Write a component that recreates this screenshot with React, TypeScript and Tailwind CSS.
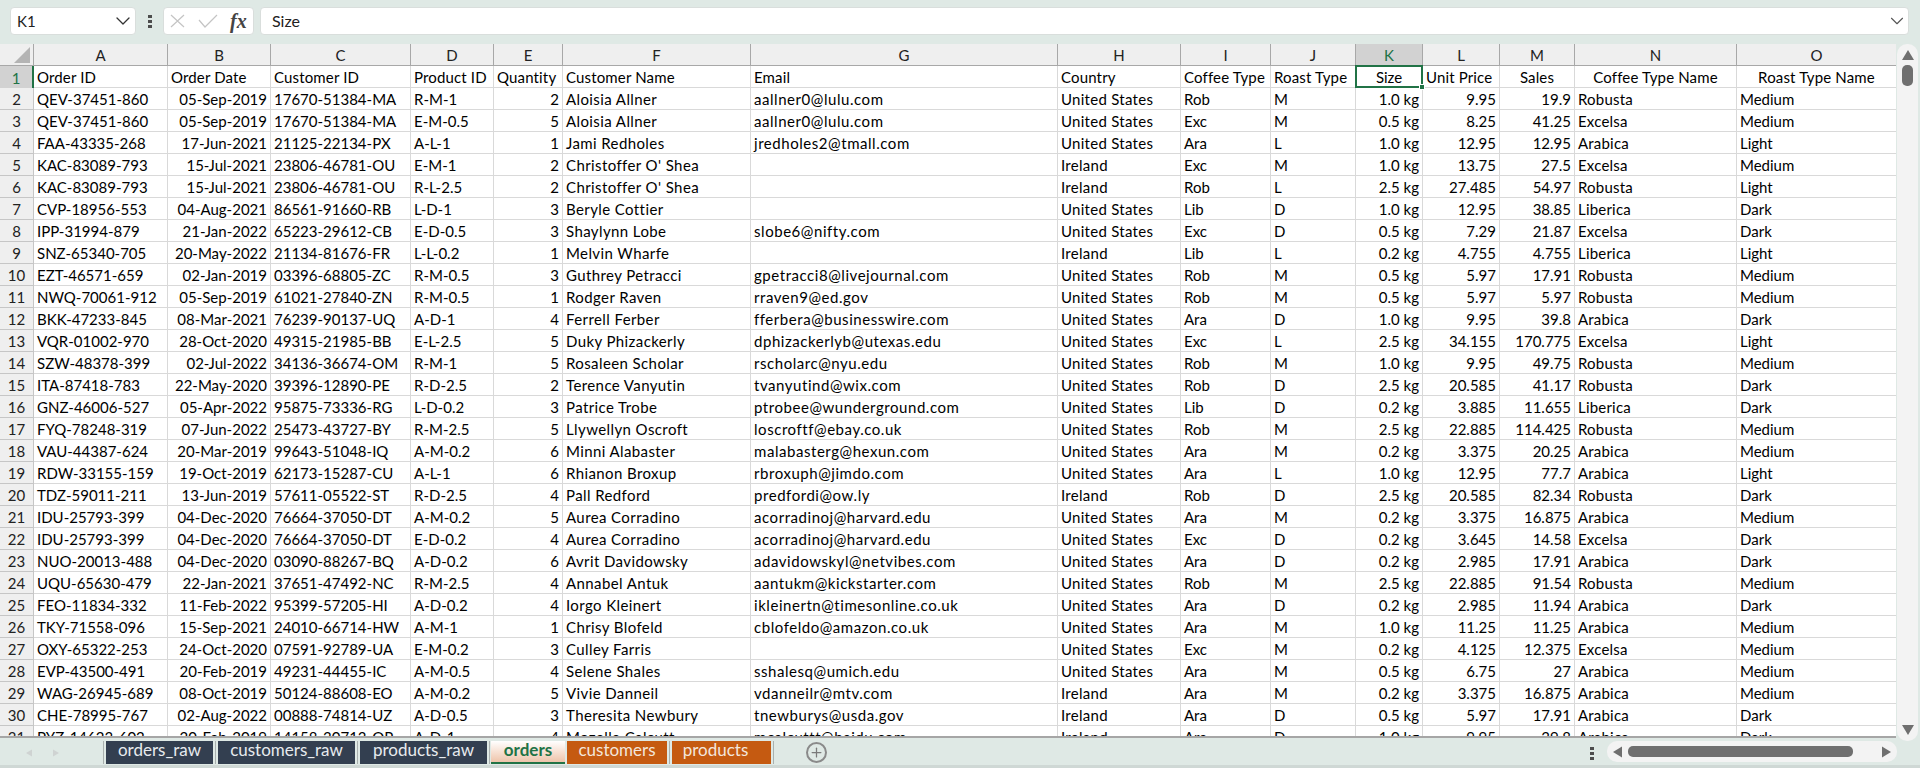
import { ChevronDown, Plus } from 'lucide-react'

const columns = ['A', 'B', 'C', 'D', 'E', 'F', 'G', 'H', 'I', 'J', 'K', 'L', 'M', 'N', 'O']

const headers = [
  'Order ID', 'Order Date', 'Customer ID', 'Product ID', 'Quantity', 'Customer Name', 'Email', 'Country',
  'Coffee Type', 'Roast Type', 'Size', 'Unit Price', 'Sales', 'Coffee Type Name', 'Roast Type Name',
]

// columns whose data sits on the right of the cell
const rightAligned = [1, 4, 10, 11, 12]
const centeredHeaders = [10, 12, 13, 14]

// lowercase runs wider in the sheet than Lato does
const spacing: Record<number, string> = {
  5: 'tracking-[0.4px]',
  6: 'tracking-[0.55px]',
  7: 'tracking-[0.28px]',
  13: 'tracking-[0.2px]',
}

const rows = `QEV-37451-860|05-Sep-2019|17670-51384-MA|R-M-1|2|Aloisia Allner|aallner0@lulu.com|United States|Rob|M|1.0 kg|9.95|19.9|Robusta|Medium
QEV-37451-860|05-Sep-2019|17670-51384-MA|E-M-0.5|5|Aloisia Allner|aallner0@lulu.com|United States|Exc|M|0.5 kg|8.25|41.25|Excelsa|Medium
FAA-43335-268|17-Jun-2021|21125-22134-PX|A-L-1|1|Jami Redholes|jredholes2@tmall.com|United States|Ara|L|1.0 kg|12.95|12.95|Arabica|Light
KAC-83089-793|15-Jul-2021|23806-46781-OU|E-M-1|2|Christoffer O' Shea||Ireland|Exc|M|1.0 kg|13.75|27.5|Excelsa|Medium
KAC-83089-793|15-Jul-2021|23806-46781-OU|R-L-2.5|2|Christoffer O' Shea||Ireland|Rob|L|2.5 kg|27.485|54.97|Robusta|Light
CVP-18956-553|04-Aug-2021|86561-91660-RB|L-D-1|3|Beryle Cottier||United States|Lib|D|1.0 kg|12.95|38.85|Liberica|Dark
IPP-31994-879|21-Jan-2022|65223-29612-CB|E-D-0.5|3|Shaylynn Lobe|slobe6@nifty.com|United States|Exc|D|0.5 kg|7.29|21.87|Excelsa|Dark
SNZ-65340-705|20-May-2022|21134-81676-FR|L-L-0.2|1|Melvin Wharfe||Ireland|Lib|L|0.2 kg|4.755|4.755|Liberica|Light
EZT-46571-659|02-Jan-2019|03396-68805-ZC|R-M-0.5|3|Guthrey Petracci|gpetracci8@livejournal.com|United States|Rob|M|0.5 kg|5.97|17.91|Robusta|Medium
NWQ-70061-912|05-Sep-2019|61021-27840-ZN|R-M-0.5|1|Rodger Raven|rraven9@ed.gov|United States|Rob|M|0.5 kg|5.97|5.97|Robusta|Medium
BKK-47233-845|08-Mar-2021|76239-90137-UQ|A-D-1|4|Ferrell Ferber|fferbera@businesswire.com|United States|Ara|D|1.0 kg|9.95|39.8|Arabica|Dark
VQR-01002-970|28-Oct-2020|49315-21985-BB|E-L-2.5|5|Duky Phizackerly|dphizackerlyb@utexas.edu|United States|Exc|L|2.5 kg|34.155|170.775|Excelsa|Light
SZW-48378-399|02-Jul-2022|34136-36674-OM|R-M-1|5|Rosaleen Scholar|rscholarc@nyu.edu|United States|Rob|M|1.0 kg|9.95|49.75|Robusta|Medium
ITA-87418-783|22-May-2020|39396-12890-PE|R-D-2.5|2|Terence Vanyutin|tvanyutind@wix.com|United States|Rob|D|2.5 kg|20.585|41.17|Robusta|Dark
GNZ-46006-527|05-Apr-2022|95875-73336-RG|L-D-0.2|3|Patrice Trobe|ptrobee@wunderground.com|United States|Lib|D|0.2 kg|3.885|11.655|Liberica|Dark
FYQ-78248-319|07-Jun-2022|25473-43727-BY|R-M-2.5|5|Llywellyn Oscroft|loscroftf@ebay.co.uk|United States|Rob|M|2.5 kg|22.885|114.425|Robusta|Medium
VAU-44387-624|20-Mar-2019|99643-51048-IQ|A-M-0.2|6|Minni Alabaster|malabasterg@hexun.com|United States|Ara|M|0.2 kg|3.375|20.25|Arabica|Medium
RDW-33155-159|19-Oct-2019|62173-15287-CU|A-L-1|6|Rhianon Broxup|rbroxuph@jimdo.com|United States|Ara|L|1.0 kg|12.95|77.7|Arabica|Light
TDZ-59011-211|13-Jun-2019|57611-05522-ST|R-D-2.5|4|Pall Redford|predfordi@ow.ly|Ireland|Rob|D|2.5 kg|20.585|82.34|Robusta|Dark
IDU-25793-399|04-Dec-2020|76664-37050-DT|A-M-0.2|5|Aurea Corradino|acorradinoj@harvard.edu|United States|Ara|M|0.2 kg|3.375|16.875|Arabica|Medium
IDU-25793-399|04-Dec-2020|76664-37050-DT|E-D-0.2|4|Aurea Corradino|acorradinoj@harvard.edu|United States|Exc|D|0.2 kg|3.645|14.58|Excelsa|Dark
NUO-20013-488|04-Dec-2020|03090-88267-BQ|A-D-0.2|6|Avrit Davidowsky|adavidowskyl@netvibes.com|United States|Ara|D|0.2 kg|2.985|17.91|Arabica|Dark
UQU-65630-479|22-Jan-2021|37651-47492-NC|R-M-2.5|4|Annabel Antuk|aantukm@kickstarter.com|United States|Rob|M|2.5 kg|22.885|91.54|Robusta|Medium
FEO-11834-332|11-Feb-2022|95399-57205-HI|A-D-0.2|4|Iorgo Kleinert|ikleinertn@timesonline.co.uk|United States|Ara|D|0.2 kg|2.985|11.94|Arabica|Dark
TKY-71558-096|15-Sep-2021|24010-66714-HW|A-M-1|1|Chrisy Blofeld|cblofeldo@amazon.co.uk|United States|Ara|M|1.0 kg|11.25|11.25|Arabica|Medium
OXY-65322-253|24-Oct-2020|07591-92789-UA|E-M-0.2|3|Culley Farris||United States|Exc|M|0.2 kg|4.125|12.375|Excelsa|Medium
EVP-43500-491|20-Feb-2019|49231-44455-IC|A-M-0.5|4|Selene Shales|sshalesq@umich.edu|United States|Ara|M|0.5 kg|6.75|27|Arabica|Medium
WAG-26945-689|08-Oct-2019|50124-88608-EO|A-M-0.2|5|Vivie Danneil|vdanneilr@mtv.com|Ireland|Ara|M|0.2 kg|3.375|16.875|Arabica|Medium
CHE-78995-767|02-Aug-2022|00888-74814-UZ|A-D-0.5|3|Theresita Newbury|tnewburys@usda.gov|Ireland|Ara|D|0.5 kg|5.97|17.91|Arabica|Dark
PYZ-14623-602|20-Feb-2019|14158-30713-OP|A-D-1|4|Mozelle Calcutt|mcalcuttt@baidu.com|Ireland|Ara|D|1.0 kg|9.95|39.8|Arabica|Dark`
  .split('\n')
  .map((line) => line.split('|'))

function Kebab() {
  return (
    <div className="flex flex-col gap-[2px]">
      <span className="w-[4px] h-[3px] bg-[#4d4d4d]" />
      <span className="w-[4px] h-[3px] bg-[#4d4d4d]" />
      <span className="w-[4px] h-[3px] bg-[#4d4d4d]" />
    </div>
  )
}

function Triangle({ dir, className }: { dir: 'left' | 'right' | 'up' | 'down'; className: string }) {
  const points = { left: '10,0 10,12 0,6', right: '0,0 0,12 10,6', up: '0,10 12,10 6,0', down: '0,0 12,0 6,10' }[dir]
  const box = dir === 'left' || dir === 'right' ? '0 0 10 12' : '0 0 12 10'
  return (
    <svg className={className} viewBox={box} fill="currentColor">
      <polygon points={points} />
    </svg>
  )
}

function FormulaBar() {
  return (
    <div className="h-[44px] flex items-start pt-[7px] pl-[10px] pr-[11px]">
      <div className="w-[126px] h-[28px] bg-white rounded-[4px] border border-[#d9dedc] flex items-center justify-between pl-[6px] text-[15px] text-[#222]">
        <span>K1</span>
        <ChevronDown className="w-[24px] h-[24px] text-[#333]" strokeWidth={1.3} />
      </div>
      <div className="w-[27px] h-[28px] flex items-center justify-center">
        <Kebab />
      </div>
      <div className="w-[91px] h-[28px] bg-white rounded-[4px] border border-[#d9dedc] flex items-center pl-[6px]">
        <svg className="w-[15px] h-[14px] text-[#c4c4c4]" viewBox="0 0 15 14" fill="none" stroke="currentColor" strokeWidth={1.2}>
          <path d="M1 1l13 12M14 1L1 13" />
        </svg>
        <svg className="w-[20px] h-[14px] ml-[13px] text-[#c4c4c4]" viewBox="0 0 20 14" fill="none" stroke="currentColor" strokeWidth={1.2}>
          <path d="M1 6l6 7L19 1" />
        </svg>
        <span className="ml-[12px] font-['Liberation_Serif'] italic font-bold text-[20px] text-[#444] leading-none">fx</span>
      </div>
      <div className="flex-1 ml-[6px] h-[28px] bg-white rounded-[4px] border border-[#d9dedc] flex items-center justify-between pl-[11px] text-[16px] text-[#222]">
        <span>Size</span>
        <ChevronDown className="w-[22px] h-[22px] text-[#555]" strokeWidth={1.2} />
      </div>
    </div>
  )
}

function Sheet() {
  return (
    <div className="w-[1896px] h-[694px] overflow-hidden bg-white border-b-2 border-[#a6a6a6]">
      <div className="grid grid-cols-[34px_134px_103px_140px_83px_69px_188px_307px_123px_90px_85px_67px_77px_75px_162px_160px] auto-rows-[22px] text-[15px] leading-none text-black">
        <div className="bg-[#efefef] border-r border-b border-[#a8a8a8] flex items-end justify-end pr-[3px] pb-[2px]">
          <svg className="w-[16px] h-[16px] text-[#b4b4b4]" viewBox="0 0 16 16" fill="currentColor">
            <polygon points="16,0 16,16 0,16" />
          </svg>
        </div>
        {columns.map((c) =>
          c === 'K' ? (
            <div key={c} className="pt-[2px] bg-[#d2d2d2] text-[#217346] border-r border-b border-[#a8a8a8] flex items-center justify-center">{c}</div>
          ) : (
            <div key={c} className="pt-[2px] bg-[#efefef] text-[#222] border-r border-b border-[#a8a8a8] flex items-center justify-center">{c}</div>
          ),
        )}

        <div className="pt-[2px] bg-[#d2d2d2] text-[#217346] border-r-2 border-[#217346] flex items-center justify-center">1</div>
        {headers.map((h, i) =>
          i === 10 ? (
            <div key={h} className="relative pt-[2px] -mt-px -ml-px border-2 border-[#217346] flex items-center justify-center">
              {h}
              <span className="absolute -right-[4px] -bottom-[4px] w-[6px] h-[6px] bg-[#217346] border border-white" />
            </div>
          ) : (
            <div
              key={h}
              className={`pt-[2px] border-r border-b border-[#d9d9d9] flex items-center whitespace-nowrap overflow-hidden px-[3px] tracking-[0.15px] ${centeredHeaders.includes(i) ? 'justify-center' : ''}`}
            >
              {h}
            </div>
          ),
        )}

        {rows.map((row, r) => [
          <div key={`h${r}`} className="pt-[2px] bg-[#efefef] text-[#222] border-r border-b border-[#c6c6c6] flex items-center justify-center">{r + 2}</div>,
          ...row.map((value, i) => (
            <div
              key={`${r}-${i}`}
              className={`pt-[2px] border-r border-b border-[#d9d9d9] flex items-center whitespace-nowrap overflow-hidden px-[3px] ${rightAligned.includes(i) ? 'justify-end' : ''} ${spacing[i] ?? ''}`}
            >
              {value}
            </div>
          )),
        ])}
      </div>
    </div>
  )
}

function VerticalScroll() {
  return (
    <div className="w-[21px] h-[697px] ml-px bg-[#f3f3f3] rounded-b-[10px] rounded-t-[10px] flex flex-col items-center pt-[6px] pb-[6px]">
      <Triangle dir="up" className="w-[12px] h-[10px] text-[#6f6f6f]" />
      <div className="w-[11px] h-[21px] mt-[5px] rounded-[5px] bg-[#6f6f6f]" />
      <div className="flex-1" />
      <Triangle dir="down" className="w-[12px] h-[10px] text-[#6f6f6f]" />
    </div>
  )
}

const tabs = [
  { label: 'orders_raw', width: 'w-[107px]' },
  { label: 'customers_raw', width: 'w-[137px]' },
  { label: 'products_raw', width: 'w-[127px]' },
]

function Separator() {
  return <span className="w-px h-[23px] mx-[2px] bg-[#a9b0ae]" />
}

function TabBar() {
  return (
    <div className="h-[27px] flex items-start text-[17px] leading-none border-b-[3px] border-[#cfd8d5]">
      <div className="w-[101px] h-[24px] flex items-center pl-[26px] gap-[21px] text-[#cfd3d2]">
        <Triangle dir="left" className="w-[6px] h-[10px]" />
        <Triangle dir="right" className="w-[6px] h-[10px]" />
      </div>
      <Separator />
      {tabs.map((t) => (
        <div key={t.label} className="flex items-center">
          <div className={`${t.width} h-[23px] bg-[#333f50] flex justify-center text-[#e7ebee]`}>{t.label}</div>
          <Separator />
        </div>
      ))}
      <div className="w-[74px] h-[23px] -ml-[1px] mr-[2px] bg-linear-to-b from-white to-[#eec4aa] border-b-2 border-[#217346] flex justify-center font-bold text-[#217346]">
        orders
      </div>
      <div className="w-[100px] h-[23px] bg-[#c55a11] flex justify-center text-[#f3e6dc]">customers</div>
      <Separator />
      <div className="w-[99px] h-[23px] bg-[#c55a11] flex justify-center pr-[12px] text-[#f3e6dc]">products</div>
      <Separator />
      <div className="ml-[30px] mt-[1px] w-[21px] h-[21px] rounded-full border-2 border-[#8a8a8a] flex items-center justify-center">
        <Plus className="w-[15px] h-[15px] text-[#7a7a7a]" strokeWidth={2} />
      </div>
      <div className="flex-1" />
      <div className="h-[24px] flex items-center mr-[13px]">
        <Kebab />
      </div>
      <div className="w-[290px] h-[21px] mr-[23px] bg-[#f3f3f3] rounded-[10px] flex items-center pl-[6px] pr-[6px]">
        <Triangle dir="left" className="w-[9px] h-[12px] text-[#6f6f6f]" />
        <div className="w-[225px] h-[11px] ml-[6px] rounded-[5px] bg-[#6f6f6f]" />
        <div className="flex-1" />
        <Triangle dir="right" className="w-[9px] h-[12px] text-[#6f6f6f]" />
      </div>
    </div>
  )
}

export default function App() {
  return (
    <div className="w-[1920px] h-[768px] overflow-hidden bg-[#dfe9e5] font-['Lato',sans-serif]">
      <FormulaBar />
      <div className="flex items-start">
        <Sheet />
        <VerticalScroll />
      </div>
      <TabBar />
    </div>
  )
}
